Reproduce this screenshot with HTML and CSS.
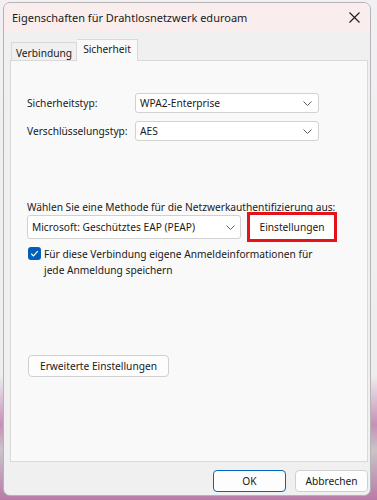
FILE: index.html
```html
<!DOCTYPE html>
<html lang="de">
<head>
<meta charset="utf-8">
<link rel="stylesheet" href="styles.css">
</head>
<body>
<div class="window">
  <div class="titlebar">
    <span class="title">Eigenschaften für Drahtlosnetzwerk eduroam</span>
    <svg class="close" width="11" height="11" viewBox="0 0 11 11"><path d="M0.5 0.5L10.5 10.5M10.5 0.5L0.5 10.5" stroke="#1a1a1a" stroke-width="1.1" fill="none"/></svg>
  </div>
  <div class="content">
    <div class="tabs">
      <div class="tab first">Verbindung</div>
      <div class="tab active">Sicherheit</div>
    </div>
    <div class="panel">
      <div class="row">
        <span class="label">Sicherheitstyp:</span>
        <div class="select wide"><span>WPA2-Enterprise</span><svg class="chev" width="9" height="5" viewBox="0 0 9 5"><path d="M0.5 0.5L4.5 4.5L8.5 0.5" stroke="#606060" fill="none"/></svg></div>
      </div>
      <div class="row r2">
        <span class="label">Verschlüsselungstyp:</span>
        <div class="select wide"><span>AES</span><svg class="chev" width="9" height="5" viewBox="0 0 9 5"><path d="M0.5 0.5L4.5 4.5L8.5 0.5" stroke="#606060" fill="none"/></svg></div>
      </div>
      <div class="method-text">Wählen Sie eine Methode für die Netzwerkauthentifizierung aus:</div>
      <div class="method-row">
        <div class="select method"><span>Microsoft: Geschütztes EAP (PEAP)</span><svg class="chev" width="9" height="5" viewBox="0 0 9 5"><path d="M0.5 0.5L4.5 4.5L8.5 0.5" stroke="#606060" fill="none"/></svg></div>
        <div class="btn highlight">Einstellungen</div>
      </div>
      <div class="check-row">
        <span class="checkbox"><svg width="13" height="13" viewBox="0 0 13 13"><path d="M3.2 6.8L5.5 9L9.8 4.2" stroke="#fff" stroke-width="1.2" fill="none"/></svg></span>
        <span class="check-text">Für diese Verbindung eigene Anmeldeinformationen für<br>jede Anmeldung speichern</span>
      </div>
      <div class="btn adv">Erweiterte Einstellungen</div>
    </div>
    <div class="footer">
      <div class="btn ok">OK</div>
      <div class="btn cancel">Abbrechen</div>
    </div>
  </div>
</div>
</body>
</html>
```
FILE: styles.css
```css
html, body {
  margin: 0;
  padding: 0;
}
body {
  width: 377px;
  height: 500px;
  overflow: hidden;
  background: linear-gradient(to bottom, #f2f0f2 0%, #eeeeee 75%, #c690b8 85%, #c9c4c8 90%, #b87aa8 100%);
  font-family: "Noto Sans", sans-serif;
  font-size: 10.2px;
  color: #1a1a1a;
  white-space: nowrap;
}
.window {
  box-sizing: border-box;
  margin: 2px 0 0 3px;
  width: 368px;
  height: 494px;
  border: 1px solid #b4b4b4;
  border-radius: 7px;
  overflow: hidden;
  background: #f0f0f0;
  display: flex;
  flex-direction: column;
}
.titlebar {
  height: 29px;
  flex: none;
  background: #f9eeed;
  display: flex;
  align-items: center;
  padding: 0 0 0 8px;
}
.title {
  flex: 1;
  font-size: 11px;
  color: #1a1a1a;
  line-height: 16px;
  padding-top: 1px;
}
.close {
  margin-right: 10px;
}
.content {
  flex: 1;
  display: flex;
  flex-direction: column;
  padding: 7px 2px 0 6px;
}
.tabs {
  display: flex;
  align-items: flex-end;
  height: 21px;
  padding-left: 1px;
}
.tab {
  box-sizing: border-box;
  height: 18px;
  border: 1px solid #d9d9d9;
  border-bottom: none;
  background: #f0f0f0;
  line-height: 18px;
  text-align: center;
}
.tab.first {
  width: 66px;
  padding-top: 1px;
}
.tab.active {
  width: 61px;
  height: 22px;
  background: #f9f9f9;
  border-left: none;
  line-height: 18px;
  position: relative;
  top: 1px;
}
.panel {
  box-sizing: border-box;
  height: 402px;
  width: 358px;
  background: #f9f9f9;
  border: 1px solid #d9d9d9;
  padding: 32px 0 0 16px;
  display: flex;
  flex-direction: column;
}
.row {
  display: flex;
  align-items: center;
  height: 20px;
}
.row.r2 {
  margin-top: 8px;
}
.label {
  width: 108px;
}
.select {
  box-sizing: border-box;
  height: 20px;
  border: 1px solid #d1d1d1;
  border-radius: 3px;
  background: #ffffff;
  display: flex;
  align-items: center;
  justify-content: space-between;
  padding: 0 6px 0 4px;
}
.select.wide {
  width: 184px;
}
.chev {
  flex: none;
}
.method-text {
  margin-top: 58px;
  line-height: 16px;
}
.method-row {
  display: flex;
  align-items: center;
  margin-top: -3px;
  height: 30px;
}
.select.method {
  width: 214px;
  height: 24px;
  padding-right: 5px;
}
.btn {
  box-sizing: border-box;
  display: flex;
  align-items: center;
  justify-content: center;
  background: #fdfdfd;
  border: 1px solid #d0d0d0;
  border-radius: 4px;
}
.btn.highlight {
  width: 90px;
  height: 30px;
  margin-left: 6px;
  border: 3px solid #e4131b;
  border-radius: 0;
  background: #ffffff;
}
.check-row {
  display: flex;
  align-items: flex-start;
  margin-top: 4px;
  margin-left: 1px;
}
.checkbox {
  width: 13px;
  height: 13px;
  border-radius: 3px;
  background: #005fb8;
  flex: none;
  margin-top: 1px;
  display: flex;
}
.check-text {
  margin-left: 3px;
  line-height: 16px;
}
.btn.adv {
  width: 141px;
  height: 22px;
  margin-top: 77px;
  margin-left: 1px;
}
.footer {
  display: flex;
  justify-content: flex-end;
  padding: 8px 0 0 0;
  gap: 9px;
}
.btn.ok, .btn.cancel {
  width: 73px;
  height: 22px;
}
.btn.ok {
  border-color: #0067c0;
}
```
